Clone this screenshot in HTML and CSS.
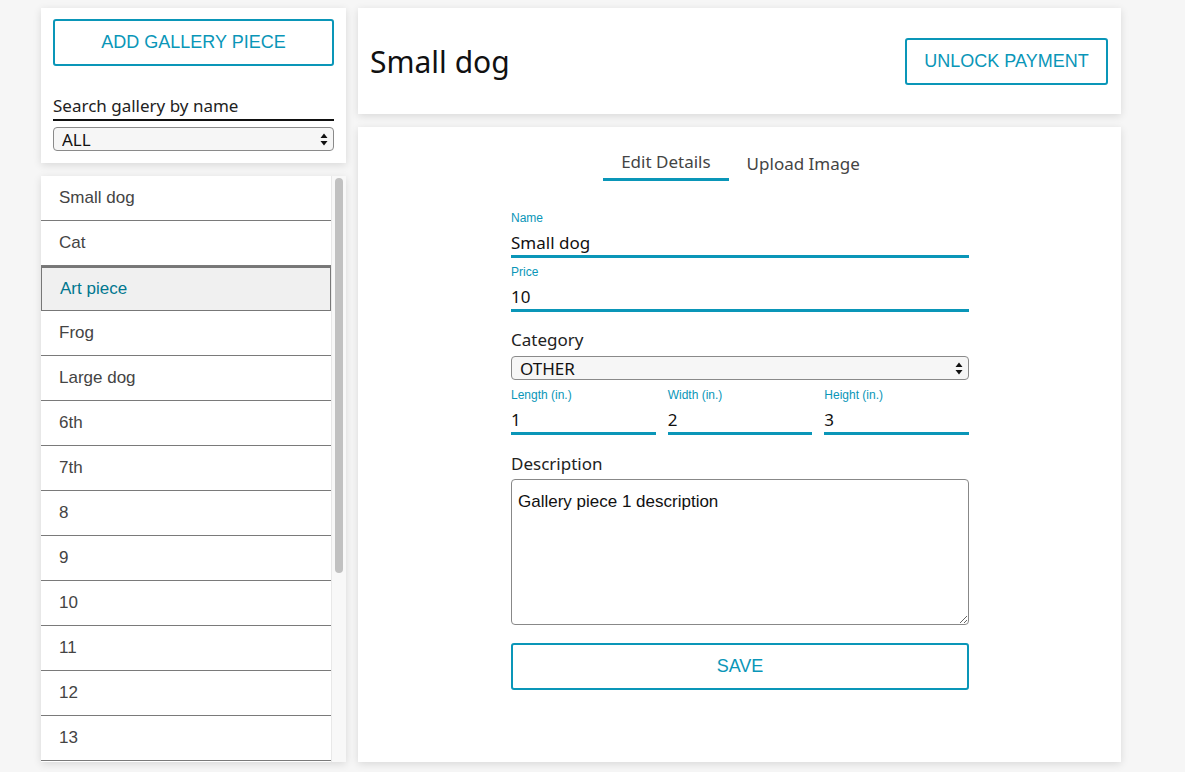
FILE: index.html
```html
<!DOCTYPE html>
<html lang="en">

    <head>
        <meta charset="UTF-8">
        <title>Gallery</title>
        <link rel="stylesheet" href="styles.css">
    </head>

    <body>
        <div class="page">

            <aside class="sidebar">
                <div class="card side-top">
                    <button class="outline-btn add-btn">ADD GALLERY PIECE</button>
                    <input class="search" type="text" placeholder="Search gallery by name">
                    <div class="select-wrap">
                        <select class="filter">
                            <option>ALL</option>
                        </select>
                        <svg class="arrows" width="8" height="13" viewBox="0 0 8 13">
                            <path d="M4 0.5 L7.5 5 L0.5 5 Z M4 12.5 L7.5 8 L0.5 8 Z" fill="#111"/>
                        </svg>
                    </div>
                </div>

                <div class="card piece-panel">
                    <ul class="piece-list">
                        <li>Small dog</li>
                        <li>Cat</li>
                        <li class="selected">Art piece</li>
                        <li>Frog</li>
                        <li>Large dog</li>
                        <li>6th</li>
                        <li>7th</li>
                        <li>8</li>
                        <li>9</li>
                        <li>10</li>
                        <li>11</li>
                        <li>12</li>
                        <li>13</li>
                    </ul>
                    <div class="scroll-track">
                        <div class="scroll-thumb"></div>
                    </div>
                </div>
            </aside>

            <main class="main">
                <header class="card head">
                    <h1 class="title">Small dog</h1>
                    <button class="outline-btn unlock-btn">UNLOCK PAYMENT</button>
                </header>

                <section class="card editor">
                    <nav class="tabs">
                        <span class="tab active">Edit Details</span>
                        <span class="tab">Upload Image</span>
                    </nav>

                    <form class="form">
                        <label class="field">
                            <span class="small-label">Name</span>
                            <input class="line-input" type="text" value="Small dog">
                        </label>
                        <label class="field">
                            <span class="small-label">Price</span>
                            <input class="line-input" type="text" value="10">
                        </label>

                        <label class="block-label cat-label">Category</label>
                        <div class="select-wrap cat-wrap">
                            <select class="category">
                                <option>OTHER</option>
                            </select>
                            <svg class="arrows" width="8" height="13" viewBox="0 0 8 13">
                                <path d="M4 0.5 L7.5 5 L0.5 5 Z M4 12.5 L7.5 8 L0.5 8 Z" fill="#111"/>
                            </svg>
                        </div>

                        <div class="dims">
                            <label class="field">
                                <span class="small-label">Length (in.)</span>
                                <input class="line-input" type="text" value="1">
                            </label>
                            <label class="field">
                                <span class="small-label">Width (in.)</span>
                                <input class="line-input" type="text" value="2">
                            </label>
                            <label class="field">
                                <span class="small-label">Height (in.)</span>
                                <input class="line-input" type="text" value="3">
                            </label>
                        </div>

                        <label class="block-label desc-label">Description</label>
                        <textarea class="desc">Gallery piece 1 description</textarea>

                        <button type="button" class="outline-btn save-btn">SAVE</button>
                    </form>
                </section>
            </main>

        </div>
    </body>

</html>
```

FILE: styles.css
```css
* {
    padding: 0;
    margin: 0;
    box-sizing: border-box;
}

body {
    height: 100vh;
    background-color: #f6f6f6;
    font-family: "Noto Sans", "Open Sans", sans-serif;
    color: #222;
    overflow: hidden;
}

.page {
    display: flex;
    gap: 12px;
    padding: 8px 0 10px 41px;
    height: 772px;
}

.card {
    background-color: #fff;
    box-shadow: 0 2px 8px rgba(0, 0, 0, 0.12);
}

.outline-btn {
    background: #fff;
    border: 2px solid #0a96b8;
    border-radius: 3px;
    color: #0a96b8;
    font-family: "Liberation Sans", Arial, sans-serif;
    font-size: 18px;
    cursor: pointer;
}

/* mac style selects */
.select-wrap {
    position: relative;
    display: flex;
}

.select-wrap select {
    appearance: none;
    -webkit-appearance: none;
    width: 100%;
    border: 1px solid #8a8a8a;
    border-radius: 4px;
    background: #f6f6f6;
    font-family: "Noto Sans", sans-serif;
    color: #111;
    padding: 0 8px;
}

.select-wrap .arrows {
    position: absolute;
    right: 6px;
    top: 50%;
    margin-top: -6px;
    pointer-events: none;
}

/* left column */
.sidebar {
    width: 305px;
    display: flex;
    flex-direction: column;
    gap: 13px;
}

.side-top {
    height: 155px;
    padding: 11px 12px 0 12px;
    display: flex;
    flex-direction: column;
}

.add-btn {
    height: 47px;
    width: 100%;
}

.search {
    margin-top: 26px;
    border: none;
    border-bottom: 2px solid #111;
    font-family: "Noto Sans", sans-serif;
    font-size: 17px;
    padding: 0 0 1px 0;
    height: 29px;
    outline: none;
}

.search::placeholder {
    color: #222;
}

.side-top .select-wrap {
    margin-top: 6px;
}

.filter {
    height: 24px;
    font-size: 17px;
}

.piece-panel {
    flex: 1;
    display: flex;
    min-height: 0;
}

.piece-list {
    list-style: none;
    flex: 1;
    overflow: hidden;
}

.piece-list li {
    height: 45px;
    line-height: 44px;
    padding-left: 18px;
    border-bottom: 1px solid #7a7a7a;
    font-family: "Liberation Sans", Arial, sans-serif;
    font-size: 17px;
    color: #444;
}

.piece-list li.selected {
    background: #f0f0f0;
    border: 1px solid #777;
    border-top-width: 2px;
    color: #00778f;
    line-height: 42px;
}

.scroll-track {
    width: 15px;
    background: #f8f8f8;
    border-left: 1px solid #e8e8e8;
    padding: 2px 3px 0 3px;
}

.scroll-thumb {
    height: 395px;
    background: #c1c1c1;
    border-radius: 5px;
}

/* right column */
.main {
    width: 763px;
    display: flex;
    flex-direction: column;
    gap: 13px;
}

.head {
    height: 106px;
    display: flex;
    align-items: center;
    justify-content: space-between;
    padding: 0 13px 0 12px;
}

.title {
    font-weight: 400;
    font-size: 30px;
    color: #111;
    margin-top: 1px;
}

.unlock-btn {
    width: 203px;
    height: 47px;
}

.editor {
    flex: 1;
    padding-top: 23px;
}

.tabs {
    display: flex;
    justify-content: center;
    gap: 18px;
    margin-left: -16px;
}

.tab {
    font-size: 17px;
    color: #444;
    padding: 0 18px 5px 18px;
    border-bottom: 3px solid transparent;
}

.tab.active {
    border-bottom-color: #0a96b8;
}

.tab + .tab {
    padding: 2px 0 3px 0;
}

.form {
    width: 458px;
    margin: 30px 0 0 153px;
    display: flex;
    flex-direction: column;
}

.field {
    display: flex;
    flex-direction: column;
    margin-bottom: 7px;
}

.small-label {
    font-family: "Liberation Sans", Arial, sans-serif;
    font-size: 12px;
    color: #0a96b8;
    line-height: 15px;
}

.line-input {
    border: none;
    border-bottom: 3px solid #0a96b8;
    font-family: "Noto Sans", sans-serif;
    font-size: 17px;
    color: #111;
    height: 32px;
    padding: 4px 0 0 0;
    outline: none;
    width: 100%;
}

.block-label {
    font-size: 17px;
    color: #222;
    line-height: 24px;
}

.cat-label {
    margin-top: 9px;
}

.cat-wrap {
    margin-top: 4px;
}

.category {
    height: 24px;
    font-size: 17px;
}

.dims {
    display: grid;
    grid-template-columns: 1fr 1fr 1fr;
    gap: 12px;
    margin-top: 8px;
}

.desc-label {
    margin-top: 10px;
}

.desc {
    margin-top: 3px;
    height: 146px;
    border: 1px solid #888;
    border-radius: 4px;
    padding: 12px 6px;
    font-family: "Liberation Sans", Arial, sans-serif;
    font-size: 17px;
    color: #111;
    resize: vertical;
}

.save-btn {
    margin-top: 18px;
    height: 47px;
    width: 100%;
}
```
